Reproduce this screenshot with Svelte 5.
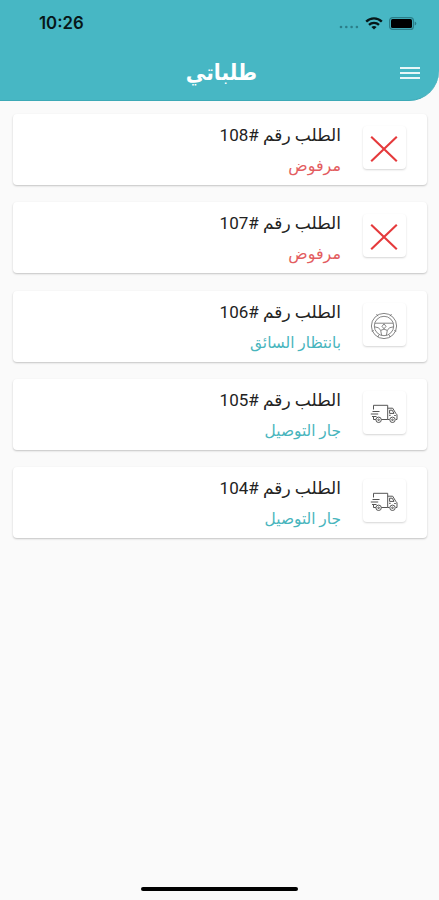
<script lang="ts">
	type Status = 'rejected' | 'waiting' | 'delivering';

	const labels: Record<Status, string> = {
		rejected: 'مرفوض',
		waiting: 'بانتظار السائق',
		delivering: 'جار التوصيل'
	};

	const orders: { id: number; status: Status }[] = [
		{ id: 108, status: 'rejected' },
		{ id: 107, status: 'rejected' },
		{ id: 106, status: 'waiting' },
		{ id: 105, status: 'delivering' },
		{ id: 104, status: 'delivering' }
	];
</script>

<div class="screen" dir="rtl">
	<header>
		<div class="status-bar" dir="ltr">
			<span class="time">10:26</span>
			<div class="indicators">
				<svg class="signal" width="20" height="4" viewBox="0 0 20 4" fill="#2b7e89">
					<circle cx="2" cy="2" r="1.3" />
					<circle cx="7.3" cy="2" r="1.3" />
					<circle cx="12.6" cy="2" r="1.3" />
					<circle cx="17.9" cy="2" r="1.3" />
				</svg>
				<svg width="18" height="13" viewBox="0 0 18 13" fill="none" stroke="#071719" stroke-width="2.3">
					<path d="M1.2 4.6a11 11 0 0 1 15.6 0" />
					<path d="M4 7.9a7 7 0 0 1 10 0" />
					<path d="M9 12.6 6.4 10.1a3.8 3.8 0 0 1 5.2 0z" fill="#071719" stroke="none" />
				</svg>
				<svg class="battery" width="28" height="13" viewBox="0 0 28 13">
					<rect x="0.6" y="0.6" width="23.8" height="11.8" rx="3" fill="none" stroke="#2b7e89" stroke-width="1.2" />
					<rect x="2" y="2" width="21" height="9" rx="1.5" fill="#000" />
					<path d="M25.7 4.5q1.6.5 1.6 2t-1.6 2z" fill="#2b7e89" />
				</svg>
			</div>
		</div>
		<div class="title-bar">
			<button class="menu" aria-label="القائمة">
				<i></i><i></i><i></i>
			</button>
			<h1>طلباتي</h1>
		</div>
	</header>

	<main>
		{#each orders as order (order.id)}
			<article class="card">
				<div class="icon">
					{#if order.status === 'rejected'}
						<svg width="28" height="28" viewBox="0 0 28 28" fill="none" stroke="#e53a3c" stroke-width="2.1">
							<path d="M1.2 1.7 26.8 26.3M26.8 1.7 1.2 26.3" />
						</svg>
					{:else if order.status === 'waiting'}
						<svg width="28" height="28" viewBox="0 0 28 28" fill="none" stroke="#707070" stroke-width="0.85">
							<circle cx="14" cy="14" r="12.6" />
							<circle cx="14" cy="14" r="9.7" />
							<path d="M8 4.2 6.5 2M20 4.2 21.5 2M3.8 18.5l-2 .8M24.2 18.5l2 .8M9 22.8l-1.2 2.3M19 22.8l1.2 2.3" />
							<path d="M4.8 11.2h18.4M4.5 14.8q5 .2 6.2 3.6l.9 5M23.5 14.8q-5 .2-6.2 3.6l-.9 5M10.7 18.4q3.3-2.5 6.6 0" />
							<path d="m14 11.8 2 2.6-2 2.4-2-2.4z" />
						</svg>
					{:else}
						<svg width="28" height="28" viewBox="0 0 28 28" fill="none" stroke="#555" stroke-width="1">
							<path d="M3.5 9.5V5.3h14.2v14.2h-6.4M3.5 16.5v3h2.4" />
							<path d="M2.5 11.5h7M.8 14h7.4M2 16.5h4.5" />
							<path d="M17.7 8.2h5l3.1 5.2 1.2 1.4v4.7h-1.2M17.7 19.5h1.8" />
							<path d="M19.6 10.2h2.6l1.8 3.2h-4.4zM25.8 15.5h-1.6M19 15.3h1.7" />
							<circle cx="8.6" cy="19.8" r="2.7" />
							<circle cx="22.5" cy="19.8" r="2.7" />
							<circle cx="8.6" cy="19.8" r="0.8" />
							<circle cx="22.5" cy="19.8" r="0.8" />
						</svg>
					{/if}
				</div>
				<div class="info">
					<h2>الطلب رقم #{order.id}</h2>
					<p class={order.status}>{labels[order.status]}</p>
				</div>
			</article>
		{/each}
	</main>

	<footer><span class="home-indicator"></span></footer>
</div>

<style>
	:global(body) {
		background: #fafafa;
	}

	.screen {
		display: flex;
		flex-direction: column;
		height: 900px;
		overflow: hidden;
		background: #fafafa;
		font-family: Roboto, 'DejaVu Sans', sans-serif;
	}

	header {
		height: 101px;
		flex: none;
		background: #47b7c4;
		border-bottom: 1px solid #3ca9b6;
		border-bottom-right-radius: 30px;
		box-sizing: border-box;
	}

	.status-bar {
		display: flex;
		justify-content: space-between;
		align-items: center;
		height: 46px;
		padding: 0 22px 0 39px;
	}

	.time {
		font: 600 16.8px/20px Inter, sans-serif;
		color: #071719;
	}

	.indicators {
		display: flex;
		align-items: center;
		gap: 6px;
	}

	.signal {
		margin-top: 8px;
	}

	.title-bar {
		display: grid;
		grid-template-columns: 60px 1fr 60px;
		align-items: center;
		height: 54px;
	}

	.menu {
		display: flex;
		flex-direction: column;
		gap: 3px;
		width: 20px;
		margin-right: 19px;
		padding: 0;
		border: 0;
		background: none;
	}

	.menu i {
		height: 2px;
		width: 20px;
		background: #e9f7f8;
	}

	h1 {
		margin: 0 -1px 0 0;
		padding-left: 3px;
		text-align: center;
		font-size: 22px;
		line-height: 30px;
		color: #fff;
		transform: scaleX(0.92);
	}

	main {
		display: flex;
		flex-direction: column;
		flex: 1;
		gap: 17.3px;
		padding: 13px 12px 0 13px;
	}

	.card {
		display: flex;
		box-sizing: border-box;
		height: 71px;
		padding: 12px 21px 0 0;
		background: #fff;
		border-radius: 4px;
		box-shadow: 0 1px 2px rgba(0, 0, 0, 0.22);
	}

	.icon {
		display: grid;
		place-items: center;
		box-sizing: border-box;
		width: 43px;
		height: 43px;
		padding: 3px 2px 0 0;
		margin-left: 22px;
		border-radius: 4px;
		box-shadow: 0 1px 2px rgba(0, 0, 0, 0.17);
	}

	h2,
	p {
		margin: 0;
		font-weight: 400;
		white-space: nowrap;
	}

	h2 {
		margin-top: -4px;
		font-size: 17px;
		line-height: 26px;
		color: #222;
	}

	p {
		margin-top: 5px;
		font-size: 15.4px;
		line-height: 26px;
		color: #48b5bd;
	}

	.rejected {
		font-size: 16px;
		color: #e35d60;
	}

	footer {
		display: flex;
		justify-content: center;
		height: 13px;
	}

	.home-indicator {
		width: 157px;
		height: 4px;
		border-radius: 2px;
		background: #000;
	}
</style>
